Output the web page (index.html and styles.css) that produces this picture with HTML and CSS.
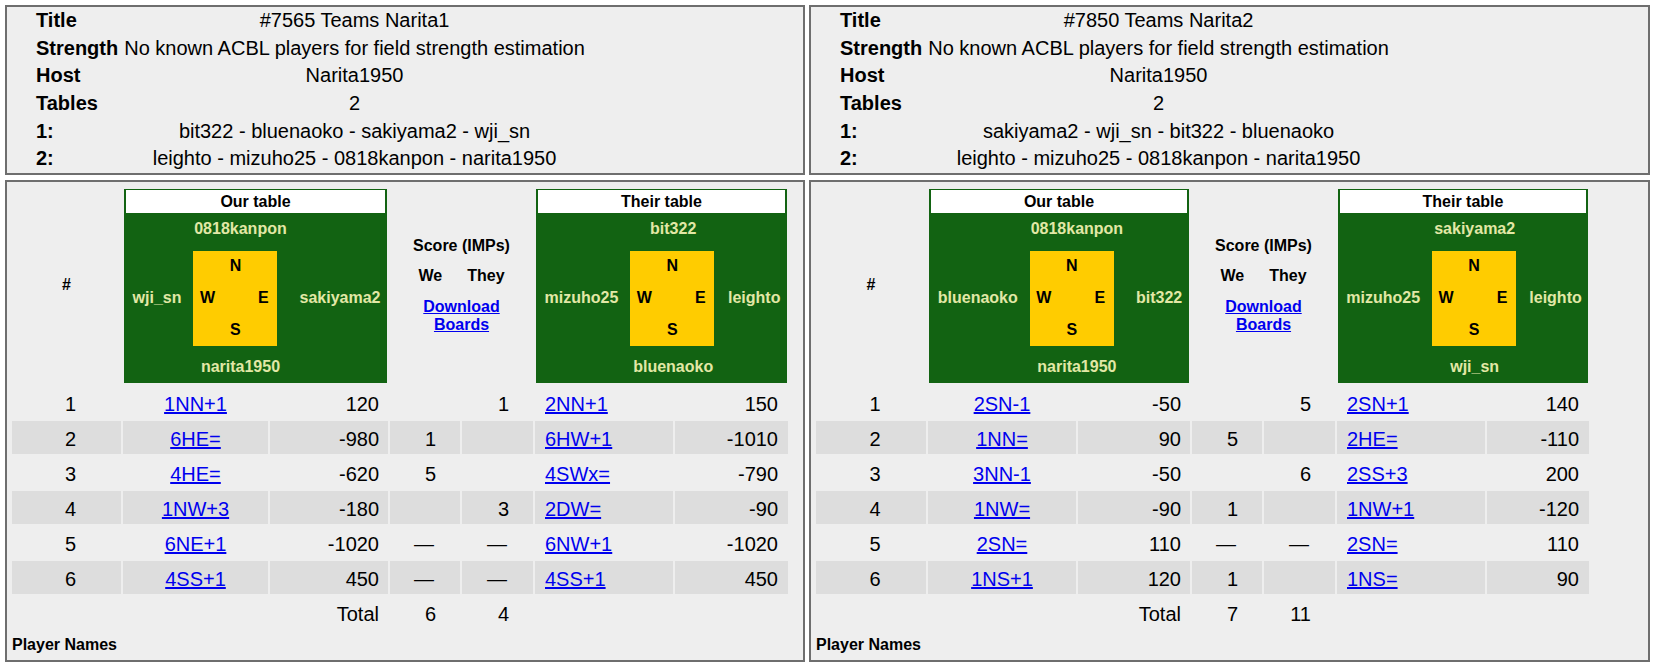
FILE: index.html
```html
<!DOCTYPE html>
<html>
<head>
<meta charset="utf-8">
<title>Team match results</title>
<link rel="stylesheet" href="styles.css">
</head>
<body>
<div class="page">
  <div class="col col-a">
    <div class="box info">
      <div class="info-grid">
        <div class="lbl">Title</div><div class="val">#7565 Teams Narita1</div>
        <div class="lbl">Strength</div><div class="val">No known ACBL players for field strength estimation</div>
        <div class="lbl">Host</div><div class="val">Narita1950</div>
        <div class="lbl">Tables</div><div class="val">2</div>
        <div class="lbl">1:</div><div class="val">bit322 - bluenaoko - sakiyama2 - wji_sn</div>
        <div class="lbl">2:</div><div class="val">leighto - mizuho25 - 0818kanpon - narita1950</div>
      </div>
    </div>
    <div class="box results">
      <div class="res-grid cols-a">
        <div class="hd hash">#</div>
        <div class="hd span2">
          <div class="seat">
            <div class="seat-title">Our table</div>
            <div class="seat-grid">
              <div class="nm nm-n">0818kanpon</div>
              <div class="nm nm-w">wji_sn</div>
              <div class="compass"><span class="cn">N</span><span class="cw">W</span><span class="ce">E</span><span class="cs">S</span></div>
              <div class="nm nm-e">sakiyama2</div>
              <div class="nm nm-s">narita1950</div>
            </div>
          </div>
        </div>
        <div class="hd span2 score">
          <div>Score (IMPs)</div>
          <div class="wethey"><span>We</span><span>They</span></div>
          <a href="#" class="dl">Download<br>Boards</a>
        </div>
        <div class="hd span2">
          <div class="seat">
            <div class="seat-title">Their table</div>
            <div class="seat-grid">
              <div class="nm nm-n">bit322</div>
              <div class="nm nm-w">mizuho25</div>
              <div class="compass"><span class="cn">N</span><span class="cw">W</span><span class="ce">E</span><span class="cs">S</span></div>
              <div class="nm nm-e">leighto</div>
              <div class="nm nm-s">bluenaoko</div>
            </div>
          </div>
        </div>

        <div class="row"><div class="c num">1</div><div class="c ct"><a href="#">1NN+1</a></div><div class="c sc">120</div><div class="c imp"></div><div class="c imp">1</div><div class="c ct2"><a href="#">2NN+1</a></div><div class="c sc2">150</div></div>
        <div class="row alt"><div class="c num">2</div><div class="c ct"><a href="#">6HE=</a></div><div class="c sc">-980</div><div class="c imp">1</div><div class="c imp"></div><div class="c ct2"><a href="#">6HW+1</a></div><div class="c sc2">-1010</div></div>
        <div class="row"><div class="c num">3</div><div class="c ct"><a href="#">4HE=</a></div><div class="c sc">-620</div><div class="c imp">5</div><div class="c imp"></div><div class="c ct2"><a href="#">4SWx=</a></div><div class="c sc2">-790</div></div>
        <div class="row alt"><div class="c num">4</div><div class="c ct"><a href="#">1NW+3</a></div><div class="c sc">-180</div><div class="c imp"></div><div class="c imp">3</div><div class="c ct2"><a href="#">2DW=</a></div><div class="c sc2">-90</div></div>
        <div class="row"><div class="c num">5</div><div class="c ct"><a href="#">6NE+1</a></div><div class="c sc">-1020</div><div class="c imp dash">—</div><div class="c imp dash">—</div><div class="c ct2"><a href="#">6NW+1</a></div><div class="c sc2">-1020</div></div>
        <div class="row alt"><div class="c num">6</div><div class="c ct"><a href="#">4SS+1</a></div><div class="c sc">450</div><div class="c imp dash">—</div><div class="c imp dash">—</div><div class="c ct2"><a href="#">4SS+1</a></div><div class="c sc2">450</div></div>
        <div class="row"><div class="c"></div><div class="c"></div><div class="c sc">Total</div><div class="c imp">6</div><div class="c imp">4</div><div class="c"></div><div class="c"></div></div>
      </div>
      <div class="pnames">Player Names</div>
    </div>
  </div>

  <div class="col col-b">
    <div class="box info">
      <div class="info-grid">
        <div class="lbl">Title</div><div class="val">#7850 Teams Narita2</div>
        <div class="lbl">Strength</div><div class="val">No known ACBL players for field strength estimation</div>
        <div class="lbl">Host</div><div class="val">Narita1950</div>
        <div class="lbl">Tables</div><div class="val">2</div>
        <div class="lbl">1:</div><div class="val">sakiyama2 - wji_sn - bit322 - bluenaoko</div>
        <div class="lbl">2:</div><div class="val">leighto - mizuho25 - 0818kanpon - narita1950</div>
      </div>
    </div>
    <div class="box results">
      <div class="res-grid cols-b">
        <div class="hd hash">#</div>
        <div class="hd span2">
          <div class="seat">
            <div class="seat-title">Our table</div>
            <div class="seat-grid">
              <div class="nm nm-n">0818kanpon</div>
              <div class="nm nm-w">bluenaoko</div>
              <div class="compass"><span class="cn">N</span><span class="cw">W</span><span class="ce">E</span><span class="cs">S</span></div>
              <div class="nm nm-e">bit322</div>
              <div class="nm nm-s">narita1950</div>
            </div>
          </div>
        </div>
        <div class="hd span2 score">
          <div>Score (IMPs)</div>
          <div class="wethey"><span>We</span><span>They</span></div>
          <a href="#" class="dl">Download<br>Boards</a>
        </div>
        <div class="hd span2">
          <div class="seat">
            <div class="seat-title">Their table</div>
            <div class="seat-grid">
              <div class="nm nm-n">sakiyama2</div>
              <div class="nm nm-w">mizuho25</div>
              <div class="compass"><span class="cn">N</span><span class="cw">W</span><span class="ce">E</span><span class="cs">S</span></div>
              <div class="nm nm-e">leighto</div>
              <div class="nm nm-s">wji_sn</div>
            </div>
          </div>
        </div>

        <div class="row"><div class="c num">1</div><div class="c ct"><a href="#">2SN-1</a></div><div class="c sc">-50</div><div class="c imp"></div><div class="c imp">5</div><div class="c ct2"><a href="#">2SN+1</a></div><div class="c sc2">140</div></div>
        <div class="row alt"><div class="c num">2</div><div class="c ct"><a href="#">1NN=</a></div><div class="c sc">90</div><div class="c imp">5</div><div class="c imp"></div><div class="c ct2"><a href="#">2HE=</a></div><div class="c sc2">-110</div></div>
        <div class="row"><div class="c num">3</div><div class="c ct"><a href="#">3NN-1</a></div><div class="c sc">-50</div><div class="c imp"></div><div class="c imp">6</div><div class="c ct2"><a href="#">2SS+3</a></div><div class="c sc2">200</div></div>
        <div class="row alt"><div class="c num">4</div><div class="c ct"><a href="#">1NW=</a></div><div class="c sc">-90</div><div class="c imp">1</div><div class="c imp"></div><div class="c ct2"><a href="#">1NW+1</a></div><div class="c sc2">-120</div></div>
        <div class="row"><div class="c num">5</div><div class="c ct"><a href="#">2SN=</a></div><div class="c sc">110</div><div class="c imp dash">—</div><div class="c imp dash">—</div><div class="c ct2"><a href="#">2SN=</a></div><div class="c sc2">110</div></div>
        <div class="row alt"><div class="c num">6</div><div class="c ct"><a href="#">1NS+1</a></div><div class="c sc">120</div><div class="c imp">1</div><div class="c imp"></div><div class="c ct2"><a href="#">1NS=</a></div><div class="c sc2">90</div></div>
        <div class="row"><div class="c"></div><div class="c"></div><div class="c sc">Total</div><div class="c imp">7</div><div class="c imp">11</div><div class="c"></div><div class="c"></div></div>
      </div>
      <div class="pnames">Player Names</div>
    </div>
  </div>
</div>
</body>
</html>
```

FILE: styles.css
```css
html, body {
  margin: 0;
  padding: 0;
  background: #ffffff;
}

body {
  font-family: "Liberation Sans", Arial, sans-serif;
  color: #000000;
  padding: 5px 0 0 5px;
}

a {
  color: #0000ee;
  text-decoration: underline;
}

.page {
  display: flex;
  gap: 4px;
  align-items: flex-start;
}

.col {
  display: flex;
  flex-direction: column;
  gap: 5px;
}

.col-a { width: 800px; }
.col-b { width: 841px; }

.box {
  box-sizing: border-box;
  border: 2px solid #6e6e6e;
  background: #eeeeee;
}

/* ---------- info box ---------- */
.info-grid {
  display: grid;
  grid-template-columns: max-content max-content;
  grid-auto-rows: 27.6px;
  column-gap: 6px;
  align-items: center;
  padding-left: 29px;
  font-size: 20px;
  line-height: 23px;
}

.lbl {
  font-weight: bold;
}

.val {
  text-align: center;
}

/* ---------- results box ---------- */
.results {
  padding: 6px 5px 6px 5px;
}

.res-grid {
  display: grid;
  gap: 2px;
  font-size: 20px;
  line-height: 23px;
}

.cols-a {
  grid-template-columns: 109px 145px 118px 70px 71px 138px 113px;
}

.cols-b {
  grid-template-columns: 110px 148px 112px 70px 71px 148px 102px;
}

.hd {
  font-size: 16px;
  font-weight: bold;
  line-height: 18.4px;
  padding: 1px;
  display: flex;
  align-items: center;
  justify-content: center;
}

.span2 {
  grid-column: span 2;
}

.hd.span2:not(.score) {
  align-items: stretch;
}

.score {
  flex-direction: column;
  gap: 12px;
}

.wethey {
  display: flex;
  gap: 25px;
}

.dl {
  display: block;
  text-align: center;
}

/* seat diagram */
.seat {
  flex: 1;
  background: #126312;
  padding: 1px 2px 2px;
  display: flex;
  flex-direction: column;
}

.seat-title {
  background: #ffffff;
  height: 23px;
  line-height: 23px;
  text-align: center;
  color: #000000;
}

.seat-grid {
  display: grid;
  grid-template-columns: auto auto auto;
  grid-template-rows: 38px 95px 35px;
}

.nm {
  color: #e2e8a6;
  white-space: nowrap;
}

.nm-n {
  grid-column: 2;
  grid-row: 1;
  align-self: end;
  text-align: center;
  padding-bottom: 12px;
}

.nm-s {
  grid-column: 2;
  grid-row: 3;
  align-self: start;
  text-align: center;
  padding-top: 12px;
}

.nm-w {
  grid-column: 1;
  grid-row: 2;
  align-self: center;
  text-align: right;
  padding: 0 12px 0 5px;
}

.nm-e {
  grid-column: 3;
  grid-row: 2;
  align-self: center;
  text-align: left;
  padding: 0 3px 0 12px;
}

.compass {
  grid-column: 2;
  grid-row: 2;
  justify-self: start;
  width: 84px;
  height: 95px;
  background: #ffcc00;
  display: grid;
  grid-template-columns: repeat(3, 28px);
  grid-template-rows: repeat(3, 1fr);
  align-items: center;
  justify-items: center;
  color: #000000;
}

.cn { grid-column: 2; grid-row: 1; }
.cw { grid-column: 1; grid-row: 2; }
.ce { grid-column: 3; grid-row: 2; }
.cs { grid-column: 2; grid-row: 3; }

/* data rows */
.row {
  display: contents;
}

.c {
  box-sizing: border-box;
  height: 33px;
  padding-top: 4px;
  display: flex;
  align-items: center;
  white-space: nowrap;
}

.row.alt > .c {
  background: #dddddd;
}

.num {
  justify-content: center;
  padding-left: 8px;
}

.ct {
  justify-content: center;
}

.sc {
  justify-content: flex-end;
  padding-right: 9px;
}

.imp {
  justify-content: flex-end;
  padding-right: 24px;
}

.imp.dash {
  padding-right: 26px;
}

.ct2 {
  justify-content: flex-start;
  padding-left: 10px;
}

.sc2 {
  justify-content: flex-end;
  padding-right: 10px;
}

.pnames {
  margin-top: 7px;
  padding-left: 0;
  font-size: 16px;
  font-weight: bold;
  line-height: 18.4px;
}
```
